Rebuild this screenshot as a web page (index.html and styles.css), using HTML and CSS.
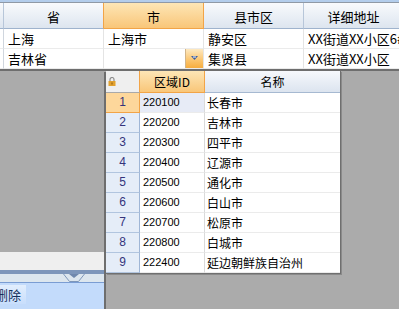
FILE: index.html
```html
<!DOCTYPE html>
<html lang="zh">

<head>
  <meta charset="UTF-8">
  <meta name="viewport" content="width=device-width, initial-scale=1.0">
  <title>地址编辑</title>
  <link rel="stylesheet" href="styles.css">
</head>

<body>
  <div class="window">
    <div class="top-strip"></div>

    <div class="grid">
      <div class="cell head edge"></div>
      <div class="cell head near-hot">省</div>
      <div class="cell head hot">市</div>
      <div class="cell head">县市区</div>
      <div class="cell head">详细地址</div>

      <div class="cell edge"></div>
      <div class="cell">上海</div>
      <div class="cell">上海市</div>
      <div class="cell">静安区</div>
      <div class="cell">XX街道XX小区6#</div>

      <div class="cell edge"></div>
      <div class="cell">吉林省</div>
      <div class="cell editing">
        <span class="drop-btn">
          <svg width="7" height="5" viewBox="0 0 7 5"><path d="M0 0h7L3.5 4z" fill="#3f5f9c"/><path d="M2 1h3" stroke="#fff" stroke-width="1"/></svg>
        </span>
      </div>
      <div class="cell">集贤县</div>
      <div class="cell">XX街道XX小区</div>
    </div>

    <div class="workspace">
      <div class="dock">
        <div class="panel">
          <div class="panel-bar"></div>
          <div class="panel-split"></div>
          <div class="panel-tab">
            <svg width="22" height="8" viewBox="0 0 22 8">
              <path d="M0.5 0L6.5 7.5H15.5L21.5 0" fill="none" stroke="#7d96ba"/>
              <path d="M6 0H16L11 4z" fill="#6f88ad"/>
            </svg>
          </div>
          <div class="panel-body">
            <button class="tool-btn"><span>删除</span></button>
          </div>
        </div>
      </div>
    </div>

    <!-- 下拉选择: 吉林省下属地区 -->
    <div class="dropdown">
      <div class="dd-row dd-head">
        <div class="dd-num lock">
          <svg width="8" height="9" viewBox="0 0 8 9">
            <path d="M2 4V2.5a2 2 0 0 1 4 0V4" fill="none" stroke="#8d8d8d" stroke-width="1.2"/>
            <rect x="0.5" y="4" width="7" height="5" fill="#e2a12e"/>
            <rect x="3.5" y="5.5" width="1" height="2" fill="#8a5a10"/>
          </svg>
        </div>
        <div class="dd-id hot">区域ID</div>
        <div class="dd-name">名称</div>
      </div>
      <div class="dd-row selected"><div class="dd-num">1</div><div class="dd-id">220100</div><div class="dd-name">长春市</div></div>
      <div class="dd-row"><div class="dd-num">2</div><div class="dd-id">220200</div><div class="dd-name">吉林市</div></div>
      <div class="dd-row"><div class="dd-num">3</div><div class="dd-id">220300</div><div class="dd-name">四平市</div></div>
      <div class="dd-row"><div class="dd-num">4</div><div class="dd-id">220400</div><div class="dd-name">辽源市</div></div>
      <div class="dd-row"><div class="dd-num">5</div><div class="dd-id">220500</div><div class="dd-name">通化市</div></div>
      <div class="dd-row"><div class="dd-num">6</div><div class="dd-id">220600</div><div class="dd-name">白山市</div></div>
      <div class="dd-row"><div class="dd-num">7</div><div class="dd-id">220700</div><div class="dd-name">松原市</div></div>
      <div class="dd-row"><div class="dd-num">8</div><div class="dd-id">220800</div><div class="dd-name">白城市</div></div>
      <div class="dd-row"><div class="dd-num">9</div><div class="dd-id">222400</div><div class="dd-name">延边朝鲜族自治州</div></div>
    </div>
  </div>
</body>

</html>
```

FILE: styles.css
```css
body,
html {
  height: 100%;
  margin: 0;
}

body {
  background-color: #ababab;
  font-family: "Noto Sans CJK SC", sans-serif;
  overflow: hidden;
}

.window {
  position: relative;
  display: flex;
  flex-direction: column;
  width: 399px;
  height: 100%;
  overflow: hidden;
}

.top-strip {
  flex-shrink: 0;
  height: 2px;
  background-color: #b3cdec;
  border-bottom: 1px solid #8f99a6;
}

/* 主表格 */
.grid {
  flex-shrink: 0;
  display: grid;
  grid-template-columns: 4px 100px 100px 100px 100px;
  grid-template-rows: 26px 20px 20px;
  width: 404px;
  background-color: #fff;
  border-bottom: 2px solid #6e6e6e;
}

.cell {
  box-sizing: border-box;
  padding: 0 4px;
  border-right: 1px solid #e4e4e4;
  border-bottom: 1px solid #ebebeb;
  font-size: 13px;
  line-height: 19px;
  color: #000;
  white-space: nowrap;
  overflow: hidden;
}

.cell.edge {
  padding: 0;
  border-right-color: #d0d6de;
}

.cell.head {
  padding-top: 3px;
  line-height: 21px;
  text-align: center;
  background: linear-gradient(#f8fafd, #dde5ef);
  border-right-color: #b7c6d9;
  border-bottom-color: #9fb3cd;
}

.cell.head.near-hot {
  border-right-color: #f2a447;
}

.cell.head.hot {
  background: linear-gradient(#fde6b6, #f9c679);
  border-right-color: #f2a447;
  border-bottom-color: #f2a447;
}

.cell.editing {
  display: flex;
  justify-content: flex-end;
  padding: 0;
}

.drop-btn {
  display: flex;
  align-items: center;
  justify-content: center;
  box-sizing: border-box;
  width: 18px;
  height: 19px;
  border-left: 1px solid #d2b58a;
  background: linear-gradient(#fde9c2, #fbc46c 60%, #f7ad3e);
}

/* 下方区域 */
.workspace {
  flex: 1;
  display: flex;
}

.dock {
  display: flex;
  flex-direction: column;
  width: 104px;
  margin-top: 1px;
  border-right: 2px solid #6e6e6e;
}

.panel {
  margin-top: auto;
}

.panel-bar {
  height: 18px;
  background-color: #efefef;
}

.panel-split {
  height: 4px;
  background-color: #7d96ba;
}

.panel-tab {
  display: flex;
  justify-content: center;
  height: 8px;
  padding-left: 43px;
  background-color: #dce6ee;
  border-bottom: 1px solid #7a9dd3;
}

.panel-tab svg {
  display: block;
}

.panel-body {
  height: 26px;
  padding-top: 2px;
  box-sizing: border-box;
  background-color: #c3dbfb;
}

.tool-btn {
  display: block;
  width: 26px;
  height: 19px;
  padding: 0;
  border: none;
  overflow: hidden;
  background: linear-gradient(#e2eefd, #c8defc);
  font-family: "Noto Sans CJK SC", sans-serif;
  font-size: 13px;
  line-height: 19px;
  color: #16305a;
  text-align: left;
  white-space: nowrap;
}

.tool-btn span {
  display: block;
  margin-left: -5px;
}

/* 下拉列表 */
.dropdown {
  position: absolute;
  left: 106px;
  top: 71px;
  background-color: #fff;
  border-right: 1px solid #6f6f6f;
  border-bottom: 1px solid #6f6f6f;
  box-shadow: 1px 1px 0 #8a8a8a;
}

.dd-row {
  display: grid;
  grid-template-columns: 34px 65px 135px;
  height: 20px;
}

.dd-row > div {
  box-sizing: border-box;
  border-bottom: 1px solid #ebebeb;
  line-height: 19px;
  white-space: nowrap;
  overflow: hidden;
}

.dd-num {
  text-align: center;
  font-family: "Liberation Sans", sans-serif;
  font-size: 12px;
  color: #34347c;
  background-color: #e5edf8;
  border-right: 1px solid #9fb6d6;
}

.dd-row > .dd-num {
  border-bottom-color: #b1c5df;
}

.dd-id {
  padding-left: 3px;
  font-family: "Liberation Sans", sans-serif;
  font-size: 11px;
  border-right: 1px solid #dadada;
}

.dd-name {
  padding-left: 2px;
  font-size: 12px;
}

.dd-head {
  height: 22px;
}

.dd-head > div {
  line-height: 21px;
  text-align: center;
  padding-left: 0;
}

.dd-head .lock {
  text-align: left;
  padding: 6px 0 0 2px;
  background-color: #efefef;
  border-right-color: #f2a447;
}

.dd-row > .lock {
  border-bottom-color: #a9a9a9;
}

.dd-head .lock svg {
  display: block;
}

.dd-head .dd-id {
  font-family: "Noto Sans CJK SC", sans-serif;
  font-size: 12px;
  background: linear-gradient(#fde6b6, #f9c679);
  border-right-color: #f2a447;
}

.dd-row > .dd-id.hot {
  border-bottom-color: #f2a447;
}

.dd-head .dd-name {
  background: linear-gradient(#f6f8fc, #dce4ef);
}

.dd-head > .dd-name {
  border-bottom-color: #a6b9d1;
}

.selected .dd-num {
  background-color: #fdd79b;
}

.dd-row.selected > .dd-num {
  border-bottom-color: #f2a447;
  border-right-color: #f2a447;
}

.selected .dd-id {
  background-color: #e7ebf6;
}
```
